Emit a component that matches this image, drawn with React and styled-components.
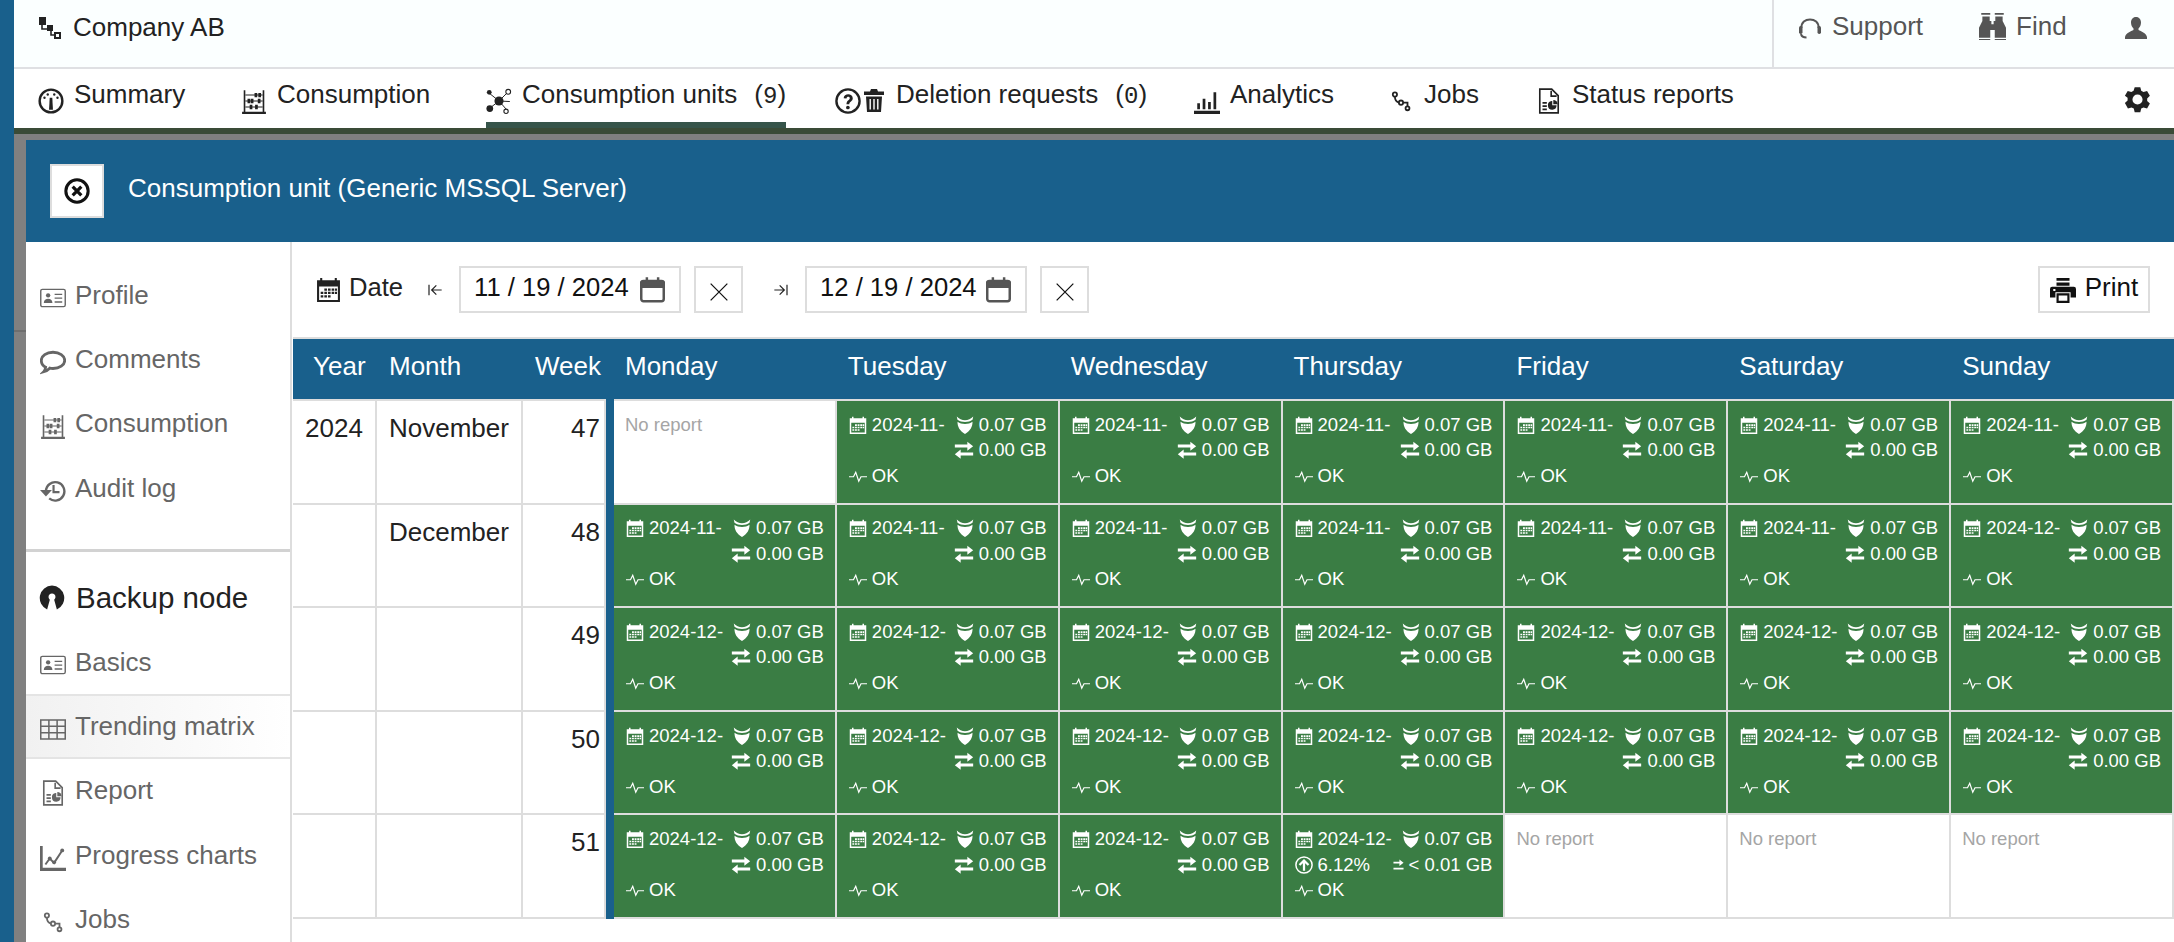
import React from 'react';
import styled, { createGlobalStyle } from 'styled-components';

const GlobalStyle = createGlobalStyle`
    html, body {
        margin: 0;
        padding: 0;
        height: 100%;
        overflow: hidden;
        background: #fff;
        font-family: "Liberation Sans", Arial, sans-serif;
    }
`;

// icons, all drawn on a 24 box with currentColor
const Svg = ({ size = 24, children, ...rest }) => (
    <svg width={size} height={size} viewBox="0 0 24 24" fill="currentColor" {...rest}>
        {children}
    </svg>
);

const TreeIcon = (p) => (
    <Svg {...p}>
        <path d="M1 1h7v8H1zM9 9h6v6H9z" />
        <path d="M4 9v4h5M13 15v4h3" fill="none" stroke="currentColor" strokeWidth="1.6" />
        <path d="M16 16h7v7h-7zm2 2v3h3v-3z" fillRule="evenodd" />
    </Svg>
);
const GaugeIcon = (p) => (
    <Svg {...p}>
        <circle cx="12" cy="12" r="10.5" fill="none" stroke="currentColor" strokeWidth="2.2" />
        <path d="M10.8 9h2.4l.6 11h-3.6z" />
        <circle cx="6" cy="9" r="1.1" /><circle cx="9" cy="6" r="1.1" /><circle cx="15" cy="6" r="1.1" /><circle cx="18" cy="9" r="1.1" />
    </Svg>
);
const AbacusIcon = (p) => (
    <Svg {...p}>
        <path d="M1 22h22v2H1zM2.500 2h1.500v20H2.500zM20 2h1.500v20H20z" />
        <path d="M4 6.500h16M4 12h16M4 17.500h16" stroke="currentColor" strokeWidth="1" />
        <path d="M12.500 4.500h2.500v4h-2.500zM16 4.500h2.500v4H16zM6 10h2.500v4H6zM9 10h2.500v4H9zM15.500 10H18v4h-2.500zM8 15.500h2.500v4H8zM13 15.500h2.500v4H13z" />
    </Svg>
);
const NodesIcon = (p) => (
    <Svg {...p}>
        <path d="M2 4l10 8-9 7M12 12l8-8M12 12l7 8M12 12l10 .5" fill="none" stroke="currentColor" strokeWidth="0.9" />
        <circle cx="12" cy="12" r="4.200" />
        <circle cx="3" cy="4" r="2.200" />
        <circle cx="3.500" cy="19" r="3.100" />
        <circle cx="20.500" cy="3.500" r="2.200" fill="#fff" stroke="currentColor" strokeWidth="1" />
        <circle cx="18.500" cy="21.500" r="2" fill="#fff" stroke="currentColor" strokeWidth="1" />
    </Svg>
);
const HelpIcon = (p) => (
    <Svg {...p}>
        <circle cx="12" cy="12" r="10.700" fill="none" stroke="currentColor" strokeWidth="2.200" />
        <path d="M8 9.500c0-5 8.400-5 8.400 0 0 3-3.200 3-3.200 5.500h-2.600c0-3.800 3-3.800 3-5.600 0-1.800-2.900-1.800-3 .3z" />
        <circle cx="11.900" cy="18" r="1.700" />
    </Svg>
);
const TrashIcon = (p) => (
    <Svg {...p}>
        <path d="M9 1h6l1 2.500h6V7H2V3.500h6z" />
        <path d="M4 8.500h16L19 24H5zM7.500 11v10.500h1.400V11zm3.800 0v10.500h1.400V11zm3.800 0v10.500h1.400V11z" fillRule="evenodd" />
    </Svg>
);
const BarsIcon = (p) => (
    <Svg {...p}>
        <path d="M0 21h24v3H0zM3 14h2.500v5.500H3zM8 10h2.500v9.500H8zM13 13h2.500v6.500H13zM18 4h2.500v15.500H18z" />
    </Svg>
);
const JobsIcon = (p) => (
    <svg width={p.size} height={p.size} viewBox="-4 -4 32 32" fill="none" stroke="currentColor" strokeWidth="2.200">
        <circle cx="4.500" cy="4" r="2.600" />
        <circle cx="12" cy="14" r="2.600" />
        <circle cx="20" cy="21" r="2.400" />
        <path d="M4.500 6.500c0 4 1 6.500 5 7.500M14.500 14H20v4.700" />
    </svg>
);
const ReportIcon = (p) => (
    <Svg {...p}>
        <path d="M3.500 1h11l6 6v16h-17zM14 2.500v5h5" fill="none" stroke="currentColor" strokeWidth="1.500" />
        <path d="M6 13h4v1.500H6zM6 16h4v1.500H6zM6 19h4v1.500H6z" />
        <path d="M15 12v4h4a4 4 0 1 1-4.500-4z" />
        <path d="M16 11a4 4 0 0 1 4 4h-4z" />
    </Svg>
);
const GearIcon = (p) => (
    <Svg {...p}>
        <path
            fillRule="evenodd"
            d="M9.500 1h5l.8 3.200 2 1.100 3.200-.9 2.500 4.300-2.400 2.300v2.300l2.400 2.300-2.500 4.300-3.200-.9-2 1.100-.8 3.200h-5l-.8-3.200-2-1.100-3.200.9L.8 15.100l2.400-2.300v-2.300L.8 8.700l2.500-4.300 3.200.9 2-1.100zM12 7.500a4.500 4.500 0 1 0 0 9 4.500 4.500 0 0 0 0-9z"
        />
    </Svg>
);
const HeadsetIcon = (p) => (
    <Svg {...p}>
        <path d="M3.500 13C2.500 1.500 21.500 1.500 20.500 13" fill="none" stroke="currentColor" strokeWidth="2" />
        <rect x="1" y="11" width="3.500" height="8" rx="1.700" />
        <rect x="19.500" y="11" width="3.500" height="8" rx="1.700" />
        <path d="M3 19c.5 2.500 2.500 3.500 5.500 3.500" fill="none" stroke="currentColor" strokeWidth="2" />
    </Svg>
);
const BinocularsIcon = (p) => (
    <Svg {...p}>
        <path d="M2 0h8v1.500H2zM14 0h8v1.500h-8zM3 3h6.500v4H11v3h2V7h1.500V3H21v4l3 6v9H14v-7h-4v7H0v-9l3-6z" />
        <path d="M0 23h10v1H0zM14 23h10v1H14z" />
    </Svg>
);
const UserIcon = (p) => (
    <Svg {...p}>
        <path d="M12 1c3.300 0 5 2.500 5 5.500 0 2.500-1 4.500-2.500 6v1.500c2.500 1.500 7.500 2.500 8.500 7V23H1v-2c1-4.500 6-5.500 8.500-7v-1.500C8 11 7 9 7 6.500 7 3.500 8.700 1 12 1z" />
    </Svg>
);
const CloseCircleIcon = (p) => (
    <Svg {...p}>
        <circle cx="12" cy="12" r="10.300" fill="none" stroke="currentColor" strokeWidth="2.800" />
        <path d="M8 8l8 8M16 8l-8 8" stroke="currentColor" strokeWidth="3" />
    </Svg>
);
const IdCardIcon = (p) => (
    <Svg {...p}>
        <rect x="0.700" y="4" width="22.600" height="16" rx="1.500" fill="none" stroke="currentColor" strokeWidth="1.300" />
        <circle cx="7.500" cy="9.500" r="2" />
        <path d="M3.500 16.500c0-5 8-5 8 0zM13.500 8h7v1.300h-7zM13.500 11.500h7v1.300h-7zM13.500 15h7v1.300h-7z" />
    </Svg>
);
const CommentIcon = (p) => (
    <Svg {...p}>
        <path
            d="M12 3c6 0 10.800 3.200 10.800 7.500S18 18 12 18c-1 0-2 0-3-.3-1.500 1.500-3.500 2.800-5.500 3.300 1-1 1.500-2.500 1.700-4.200C2.500 15.500 1.200 13.200 1.200 10.500 1.200 6.200 6 3 12 3z"
            fill="none"
            stroke="currentColor"
            strokeWidth="2.600"
        />
    </Svg>
);
const HistoryIcon = (p) => (
    <Svg {...p}>
        <path d="M5.500 12a8.500 8.500 0 1 1 3 6.800" fill="none" stroke="currentColor" strokeWidth="2.200" />
        <path d="M0 11h11l-5.500 6z" />
        <path d="M11.500 6.500h2V12H18v2h-6.500z" />
    </Svg>
);
const NodeIcon = (p) => (
    <Svg {...p}>
        <path
            fillRule="evenodd"
            d="M12 .5a11.500 11.500 0 0 1 4.500 22l-2.500-9a3.200 3.200 0 1 0-4 0l-2.500 9A11.500 11.500 0 0 1 12 .5z"
        />
    </Svg>
);
const GridIcon = (p) => (
    <Svg {...p}>
        <path
            fill="none"
            stroke="currentColor"
            strokeWidth="1.400"
            d="M.7 3.700h22.600v17.600H.7zM.7 9.500h22.600M.7 15.400h22.600M8.200 3.700v17.600M15.800 3.700v17.600"
        />
    </Svg>
);
const ChartIcon = (p) => (
    <Svg {...p}>
        <path d="M0 1h2.500v20H24v3H0z" />
        <path d="M5 18l4-5.500 4 4L20.500 5" fill="none" stroke="currentColor" strokeWidth="1.800" />
        <circle cx="20.500" cy="5" r="1.800" /><circle cx="9" cy="12.500" r="1.800" /><circle cx="13" cy="16" r="1.800" />
    </Svg>
);
const CalendarIcon = (p) => (
    <Svg {...p}>
        <path fillRule="evenodd" d="M1 3h3V1h2v2h12V1h2v2h3v21H1zm2 6v13h18V9z" />
        <path d="M8 11h2.500v2.200H8zM11.500 11H14v2.200h-2.500zM15 11h2.500v2.200H15zM18.200 11h2v2.200h-2zM4.500 14.200H7v2.200H4.500zM8 14.200h2.500v2.200H8zM11.500 14.200H14v2.200h-2.500zM15 14.200h2.500v2.200H15zM18.200 14.200h2v2.200h-2zM4.500 17.500H7v2.200H4.500zM8 17.500h2.500v2.200H8zM11.500 17.500H14v2.200h-2.500z" />
    </Svg>
);
const ShieldIcon = (p) => (
    <Svg {...p}>
        <path d="M1 .5c3 3 7 5 11 5s8-2 11-5l-1 4.500c-3 2-6 3-10 3S5 7 2 5z" />
        <path d="M2 7.500c3 2 6 3 10 3s7-1 10-3c0 7-3 12-10 16.500C5 19.500 2 14.500 2 7.500z" />
    </Svg>
);
const TransferIcon = (p) => (
    <Svg {...p}>
        <path d="M1 5.500h15V2l7 5.500-7 5.500V9H1zM23 15H8v-3.500L1 17l7 5.500V18.500h15z" />
    </Svg>
);
const SmallTransferIcon = (p) => (
    <Svg {...p}>
        <path d="M1 6h13V1l9 7-9 7v-5H1zM1 19h22v4H1z" />
    </Svg>
);
const PulseIcon = (p) => (
    <Svg {...p} fill="none" stroke="currentColor" strokeWidth="1.600">
        <path d="M0 13h6l3-6 4 12 3-6h8" />
    </Svg>
);
const UpCircleIcon = (p) => (
    <Svg {...p} fill="none" stroke="currentColor">
        <circle cx="12" cy="12" r="10.800" strokeWidth="2" />
        <path d="M12 19.500V6M6 12l6-6 6 6" strokeWidth="3" />
    </Svg>
);
const PrinterIcon = (p) => (
    <Svg {...p}>
        <path d="M6 1h12v2.500H6zM6 5h12v3H6z" />
        <path fillRule="evenodd" d="M2 9h20a2 2 0 0 1 2 2v8h-5v-5H5v5H0v-8a2 2 0 0 1 2-2zm1 2v2h2v-2z" />
        <path fillRule="evenodd" d="M6 15h12v9H6zm2 2v5h8v-5z" />
    </Svg>
);
const ArrowStopLeft = (p) => (
    <Svg {...p} fill="none" stroke="currentColor" strokeWidth="1.800">
        <path d="M3 4v16M22 12H8M14 5l-7 7 7 7" />
    </Svg>
);
const ArrowStopRight = (p) => (
    <Svg {...p} fill="none" stroke="currentColor" strokeWidth="1.800">
        <path d="M21 4v16M2 12h14M10 5l7 7-7 7" />
    </Svg>
);
const XIcon = (p) => (
    <Svg {...p} fill="none" stroke="currentColor" strokeWidth="1.500">
        <path d="M2 2l20 20M22 2L2 22" />
    </Svg>
);
const DateInputIcon = (p) => (
    <Svg {...p} fill="none" stroke="#555" strokeWidth="2.200">
        <rect x="2" y="4.500" width="20" height="18" rx="2" />
        <path d="M2 6h20v3.500H2z" fill="#555" />
        <path d="M7 1v5M17 1v5" />
    </Svg>
);

const tabs = [
    { label: 'Summary', Icon: GaugeIcon, w: 203 },
    { label: 'Consumption', Icon: AbacusIcon, w: 245 },
    { label: 'Consumption units', count: 9, Icon: NodesIcon, w: 349, active: true },
    { label: 'Deletion requests', count: 0, Icon: HelpIcon, Second: TrashIcon, w: 359 },
    { label: 'Analytics', Icon: BarsIcon, w: 194 },
    { label: 'Jobs', Icon: JobsIcon, w: 148 },
    { label: 'Status reports', Icon: ReportIcon, w: 220 },
];

const sideTop = [
    { label: 'Profile', Icon: IdCardIcon },
    { label: 'Comments', Icon: CommentIcon },
    { label: 'Consumption', Icon: AbacusIcon },
    { label: 'Audit log', Icon: HistoryIcon },
];
const sideBottom = [
    { label: 'Basics', Icon: IdCardIcon },
    { label: 'Trending matrix', Icon: GridIcon, active: true },
    { label: 'Report', Icon: ReportIcon },
    { label: 'Progress charts', Icon: ChartIcon },
    { label: 'Jobs', Icon: JobsIcon },
];

const days = ['Monday', 'Tuesday', 'Wednesday', 'Thursday', 'Friday', 'Saturday', 'Sunday'];

// one entry per day: null means no report
const weeks = [
    { year: '2024', month: 'November', week: 47, cells: [null, '11', '11', '11', '11', '11', '11'] },
    { month: 'December', week: 48, cells: ['11', '11', '11', '11', '11', '11', '12'] },
    { week: 49, cells: ['12', '12', '12', '12', '12', '12', '12'] },
    { week: 50, cells: ['12', '12', '12', '12', '12', '12', '12'] },
    { week: 51, cells: ['12', '12', '12', { month: '12', growth: true }, null, null, null] },
];

const ReportCell = ({ value }) => {
    if (!value) {
        return <EmptyCell>No report</EmptyCell>;
    }
    const month = value.month || value;
    return (
        <GreenCell>
            <CellLine>
                <CellPart><CalendarIcon size={18} /> 2024-{month}-</CellPart>
                <CellPart><ShieldIcon size={18} /> 0.07 GB</CellPart>
            </CellLine>
            <CellLine>
                {value.growth ? (
                    <>
                        <CellPart><UpCircleIcon size={18} /> 6.12%</CellPart>
                        <CellPart><SmallTransferIcon size={11} /> &lt; 0.01 GB</CellPart>
                    </>
                ) : (
                    <>
                        <span />
                        <CellPart><TransferIcon size={20} /> 0.00 GB</CellPart>
                    </>
                )}
            </CellLine>
            <CellLine>
                <CellPart><PulseIcon size={18} /> OK</CellPart>
            </CellLine>
        </GreenCell>
    );
};

const App = () => {
    return (
        <Page>
            <GlobalStyle />
            <Strip />
            <Main>
                <TopBar>
                    <Company>
                        <TreeIcon size={24} />
                        <span>Company AB</span>
                    </Company>
                    <TopActions>
                        <TopAction><HeadsetIcon size={24} />Support</TopAction>
                        <TopAction $left={56}><BinocularsIcon size={27} />Find</TopAction>
                        <UserSlot><UserIcon size={24} /></UserSlot>
                    </TopActions>
                </TopBar>
                <TabBar>
                    {tabs.map((t) => (
                        <Tab key={t.label} $w={t.w} $active={t.active}>
                            <TabIcon>
                                <t.Icon size={26} />
                                {t.Second && <t.Second size={24} />}
                            </TabIcon>
                            <TabLabel>{t.label}</TabLabel>
                            {t.count !== undefined && (
                                <TabCount>(<CountDigit>{t.count}</CountDigit>)</TabCount>
                            )}
                        </Tab>
                    ))}
                    <Settings><GearIcon size={27} /></Settings>
                </TabBar>
                <Backdrop>
                    <DialogHeader>
                        <CloseButton><CloseCircleIcon size={26} /></CloseButton>
                        <DialogTitle>Consumption unit (Generic MSSQL Server)</DialogTitle>
                    </DialogHeader>
                    <DialogBody>
                        <Sidebar>
                            <SideGroup>
                                {sideTop.map((s) => (
                                    <SideItem key={s.label}><s.Icon size={26} /><span>{s.label}</span></SideItem>
                                ))}
                            </SideGroup>
                            <SideTitle><NodeIcon size={26} /><span>Backup node</span></SideTitle>
                            {sideBottom.map((s) => (
                                <SideItem key={s.label} $active={s.active}><s.Icon size={26} /><span>{s.label}</span></SideItem>
                            ))}
                        </Sidebar>
                        <Content>
                            <Toolbar>
                                <DateLabel><CalendarIcon size={25} /><LiftedText>Date</LiftedText></DateLabel>
                                <RangeIcon $left={24}><ArrowStopLeft size={16} /></RangeIcon>
                                <DateBox><LiftedText>11 / 19 / 2024</LiftedText><DateInputIcon size={27} /></DateBox>
                                <ClearButton><XIcon size={20} /></ClearButton>
                                <RangeIcon $left={30}><ArrowStopRight size={16} /></RangeIcon>
                                <DateBox><LiftedText>12 / 19 / 2024</LiftedText><DateInputIcon size={27} /></DateBox>
                                <ClearButton><XIcon size={20} /></ClearButton>
                                <PrintButton><PrinterIcon size={26} /><LiftedText>Print</LiftedText></PrintButton>
                            </Toolbar>
                            <Matrix>
                                <HeadCell $left={20}>Year</HeadCell>
                                <HeadCell $left={12}>Month</HeadCell>
                                <HeadCell $right>Week</HeadCell>
                                <HeadCell $bar />
                                {days.map((d) => <HeadCell key={d} $left={11}>{d}</HeadCell>)}
                                {weeks.map((w) => (
                                    <React.Fragment key={w.week}>
                                        <InfoCell>{w.year}</InfoCell>
                                        <InfoCell>{w.month}</InfoCell>
                                        <InfoCell $right>{w.week}</InfoCell>
                                        <Divider />
                                        {w.cells.map((c, i) => <ReportCell key={i} value={c} />)}
                                    </React.Fragment>
                                ))}
                            </Matrix>
                        </Content>
                    </DialogBody>
                </Backdrop>
            </Main>
        </Page>
    );
};

export default App;

const Page = styled.div`
    display: flex;
    width: 2174px;
    height: 942px;
    overflow: hidden;
`;

const Strip = styled.div`
    width: 14px;
    flex: none;
    background-color: #19608c;
`;

const Main = styled.div`
    flex: 1;
    min-width: 0;
    display: flex;
    flex-direction: column;
`;

const TopBar = styled.div`
    height: 67px;
    flex: none;
    display: flex;
    justify-content: space-between;
    background-color: #fbffff;
    border-bottom: 2px solid #dfe0e3;
`;

const Company = styled.div`
    display: flex;
    align-items: center;
    gap: 11px;
    padding: 0 0 12px 24px;
    font-size: 26px;
    color: #222;
`;

const TopActions = styled.div`
    display: flex;
    align-items: center;
    width: 402px;
    padding: 0 0 14px 24px;
    box-sizing: border-box;
    border-left: 2px solid #dfe0e3;
    color: #555;
    font-size: 26px;
`;

const TopAction = styled.div`
    display: flex;
    align-items: center;
    gap: 10px;
    margin-left: ${(p) => p.$left || 0}px;
`;

const UserSlot = styled.div`
    display: flex;
    margin-left: 57px;
    padding-top: 2px;
`;

const TabBar = styled.div`
    height: 59px;
    flex: none;
    display: flex;
    align-items: stretch;
    padding-left: 24px;
    background-color: #fff;
    border-bottom: 6px solid #3a4b37;
    position: relative;
`;

const Tab = styled.div`
    width: ${(p) => p.$w}px;
    flex: none;
    display: flex;
    align-items: center;
    font-size: 26px;
    color: #222;
    box-sizing: border-box;
    position: relative;
    padding-bottom: 8px;

    ${(p) => p.$active && `
        &::after {
            content: '';
            position: absolute;
            left: 0;
            bottom: 0;
            width: 300px;
            height: 6px;
            background-color: #36544a;
        }
    `}
`;

const TabIcon = styled.span`
    display: flex;
    gap: 1px;
    margin-right: 10px;
    padding-top: 12px;
`;

const TabLabel = styled.span`
    white-space: nowrap;
`;

const TabCount = styled.span`
    margin-left: 17px;
    font-size: 26px;
`;

const CountDigit = styled.span`
    font-family: "Liberation Mono", monospace;
    font-size: 24px;
`;

const Settings = styled.div`
    position: absolute;
    right: 23px;
    top: 17px;
    display: flex;
    color: #222;
`;

const Backdrop = styled.div`
    flex: 1;
    min-height: 0;
    display: flex;
    flex-direction: column;
    padding: 6px 0 0 12px;
    background: linear-gradient(#6e6e6e, #6e6e6e) 0 196px / 100% 2px no-repeat, #808080;
`;

const DialogHeader = styled.div`
    height: 102px;
    flex: none;
    display: flex;
    align-items: center;
    padding-left: 24px;
    background-color: #19608c;
`;

const CloseButton = styled.div`
    width: 54px;
    height: 54px;
    flex: none;
    display: flex;
    align-items: center;
    justify-content: center;
    box-sizing: border-box;
    background-color: #fff;
    border: 2px solid #ddd;
    color: #111;
`;

const DialogTitle = styled.div`
    margin-left: 24px;
    padding-bottom: 5px;
    color: #fff;
    font-size: 26px;
`;

const DialogBody = styled.div`
    flex: 1;
    min-height: 0;
    display: flex;
    background-color: #fff;
`;

const Sidebar = styled.div`
    width: 266px;
    flex: none;
    padding-top: 21px;
    box-sizing: border-box;
    border-right: 2px solid #ddd;
`;

const SideGroup = styled.div`
    padding-bottom: 29px;
    border-bottom: 3px solid #d2d2d2;
`;

const SideItem = styled.div`
    height: 64.3px;
    display: flex;
    align-items: center;
    gap: 9px;
    padding-left: 14px;
    box-sizing: border-box;
    font-size: 26px;
    color: #666;

    svg {
        flex: none;
        margin-top: 5px;
    }

    ${(p) => p.$active && `
        background: linear-gradient(90deg, #f1f1f1, #fff);
        border-top: 2px solid #e4e4e4;
        border-bottom: 2px solid #e4e4e4;
    `}
`;

const SideTitle = styled.div`
    height: 65px;
    margin-top: 13px;
    display: flex;
    align-items: center;
    gap: 11px;
    padding-left: 13px;
    font-size: 29.5px;
    color: #222;
`;

const Content = styled.div`
    flex: 1;
    min-width: 0;
    padding-left: 1px;
`;

const Toolbar = styled.div`
    height: 95px;
    display: flex;
    align-items: center;
    padding: 0 24px 0 23px;
    box-sizing: border-box;
`;

const LiftedText = styled.span`
    margin-bottom: 4px;
`;

const DateLabel = styled.div`
    display: flex;
    align-items: center;
    gap: 8px;
    font-size: 25.6px;
    color: #222;
`;

const RangeIcon = styled.span`
    display: flex;
    margin-left: ${(p) => p.$left}px;
    margin-right: 16px;
    color: #222;
`;

const DateBox = styled.div`
    width: 222px;
    height: 47px;
    display: flex;
    align-items: center;
    justify-content: space-between;
    padding: 0 13px;
    box-sizing: border-box;
    border: 2px solid #ddd;
    font-size: 25.6px;
    color: #111;
`;

const ClearButton = styled.div`
    width: 49px;
    height: 47px;
    margin-left: 13px;
    display: flex;
    align-items: center;
    justify-content: center;
    box-sizing: border-box;
    border: 2px solid #ddd;
    color: #111;
    padding-top: 4px;
`;

const PrintButton = styled.div`
    width: 112px;
    height: 47px;
    margin-left: auto;
    display: flex;
    align-items: center;
    justify-content: center;
    gap: 9px;
    box-sizing: border-box;
    border: 2px solid #ddd;
    font-size: 26px;
    color: #111;
`;

const Matrix = styled.div`
    display: grid;
    grid-template-columns: 84px 146px 83px 8px repeat(7, 222.86px);
    grid-template-rows: 62px repeat(5, 103.6px);
    border-top: 2px solid #ddd;
`;

const HeadCell = styled.div`
    display: flex;
    align-items: center;
    justify-content: ${(p) => (p.$right ? 'flex-end' : 'flex-start')};
    padding: 0 5px 6px ${(p) => p.$left || 0}px;
    background-color: #19608c;
    color: #fff;
    font-size: 26px;
    border-bottom: 2px solid ${(p) => (p.$bar ? '#19608c' : '#ddd')};
`;

const InfoCell = styled.div`
    padding: 12px 4px 0 12px;
    text-align: ${(p) => (p.$right ? 'right' : 'left')};
    font-size: 26px;
    color: #222;
    box-sizing: border-box;
    border-right: 2px solid #ddd;
    border-bottom: 2px solid #ddd;
    white-space: nowrap;
`;

const Divider = styled.div`
    background-color: #19608c;
`;

const EmptyCell = styled.div`
    padding: 13px 11px 0;
    font-size: 18.5px;
    color: #a5a5a5;
    box-sizing: border-box;
    border-right: 2px solid #ddd;
    border-bottom: 2px solid #ddd;
`;

const GreenCell = styled.div`
    padding: 11px 11px 0 12px;
    background-color: #3a7d44;
    background-clip: padding-box;
    color: #fff;
    font-size: 18.5px;
    box-sizing: border-box;
    border-right: 2px solid #ddd;
    border-bottom: 2px solid #ddd;
`;

const CellLine = styled.div`
    height: 25.5px;
    display: flex;
    align-items: center;
    justify-content: space-between;
`;

const CellPart = styled.span`
    display: inline-flex;
    align-items: center;
    gap: 5px;
    white-space: nowrap;
`;
